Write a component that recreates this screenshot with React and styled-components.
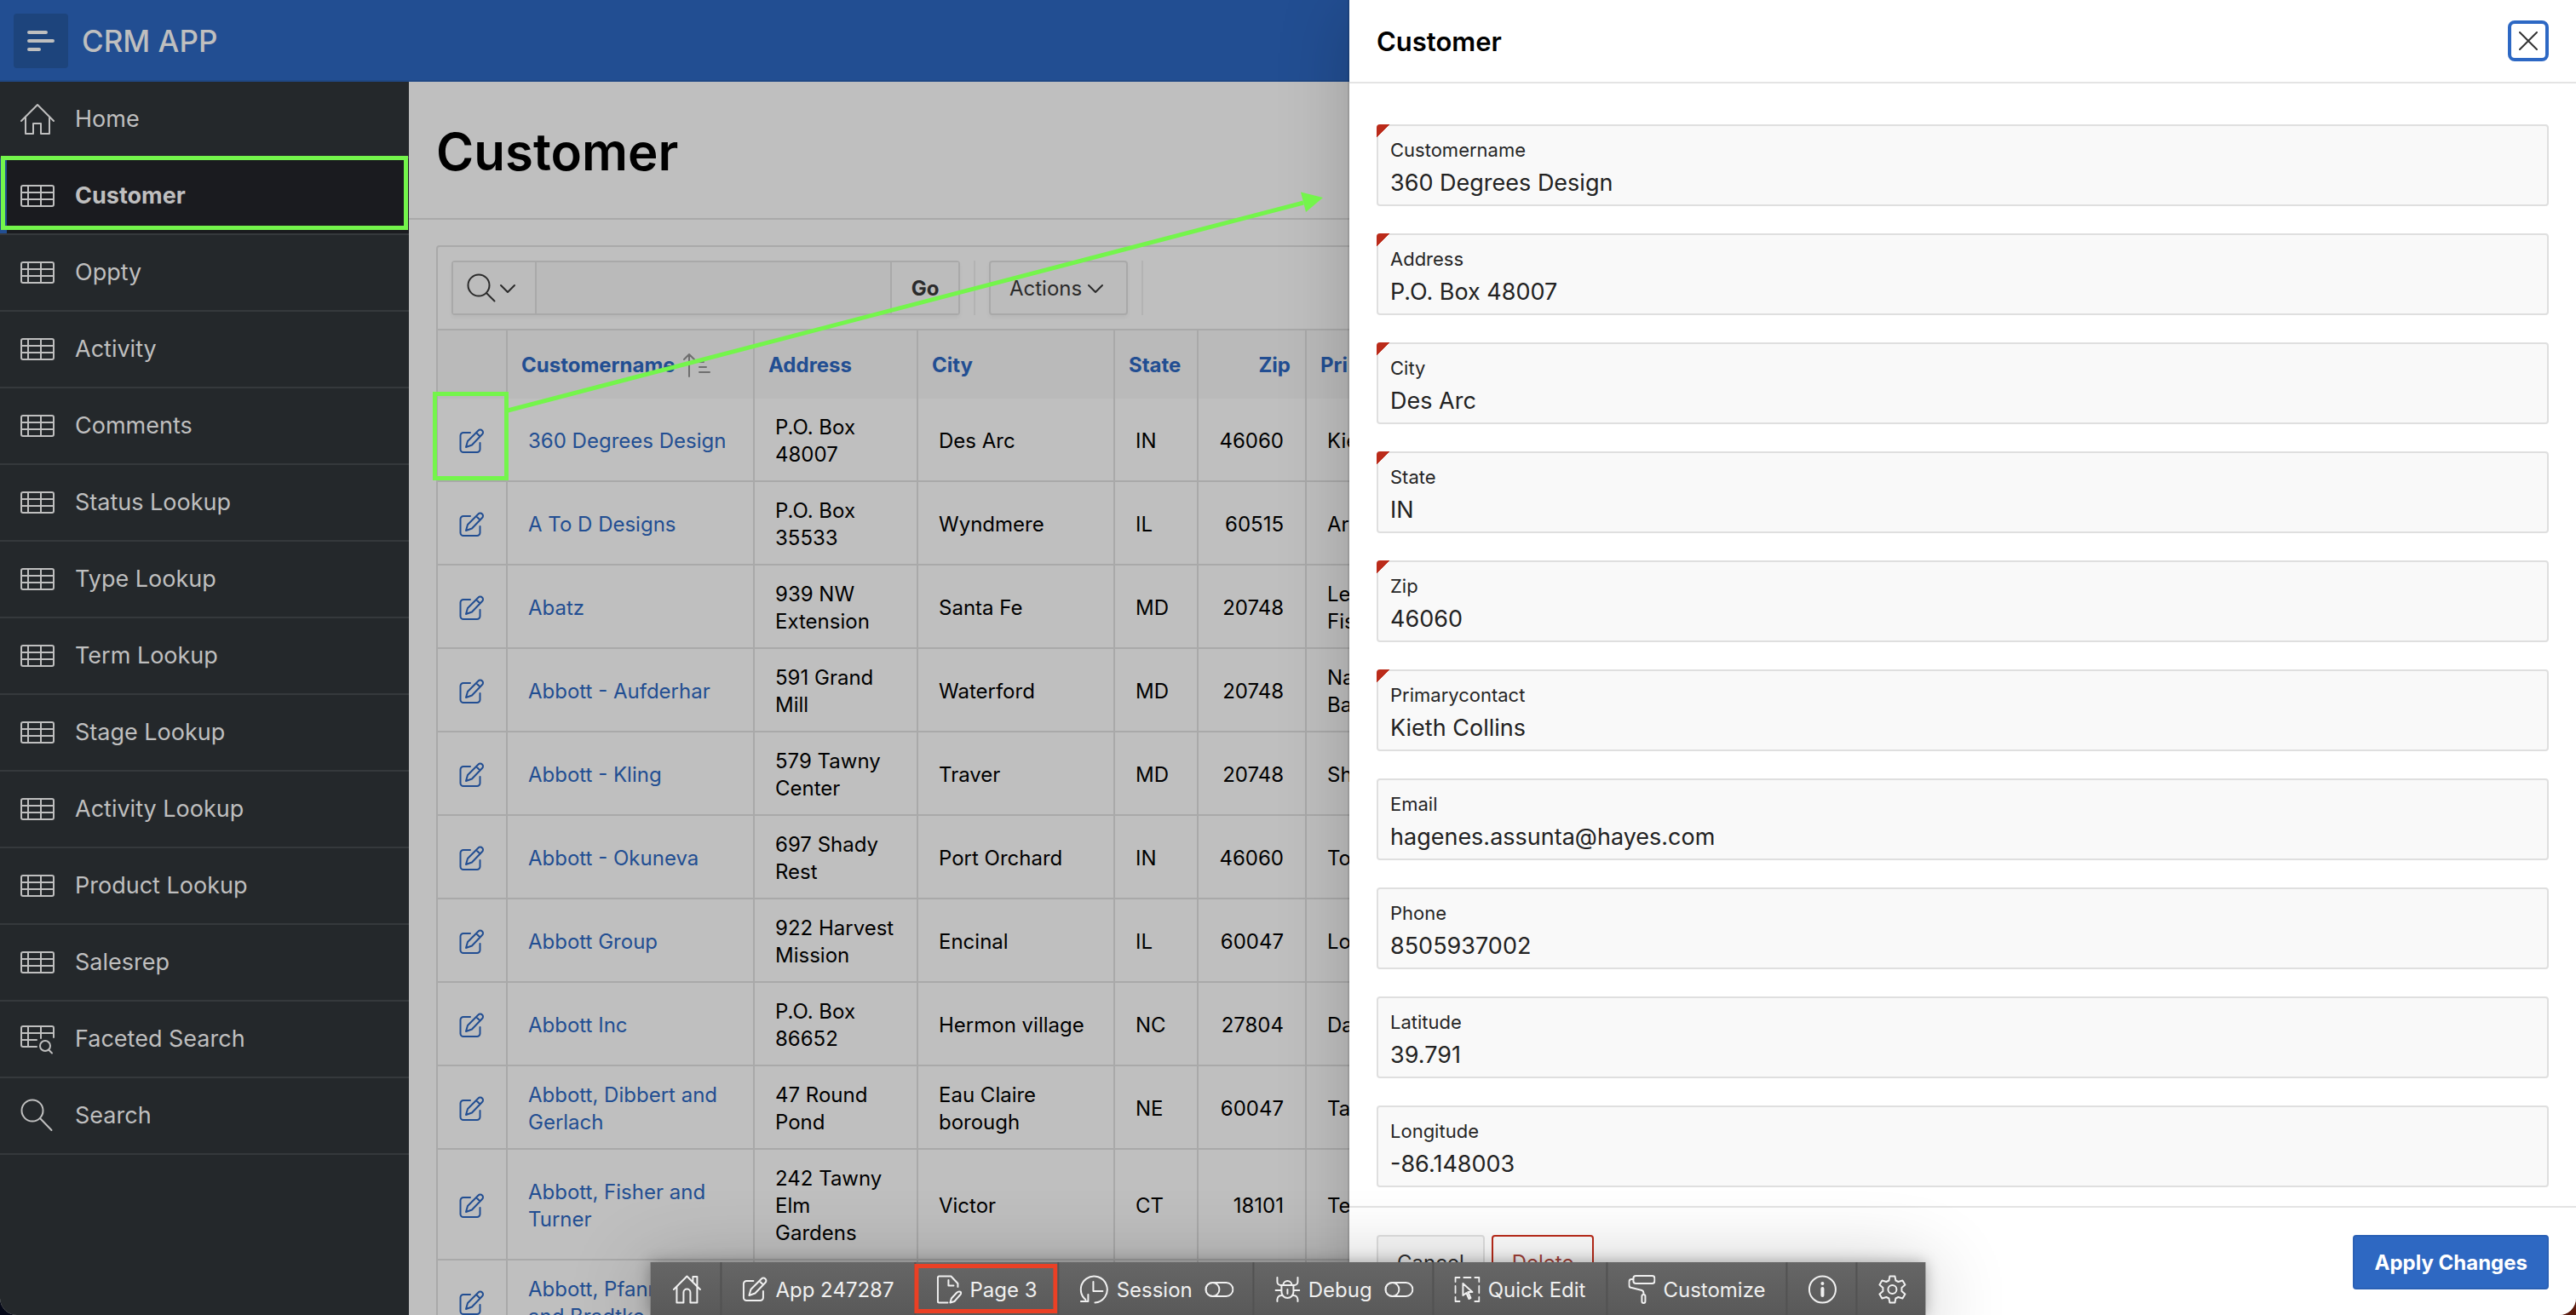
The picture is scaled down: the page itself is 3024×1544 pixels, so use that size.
import React from "react";
import styled, { createGlobalStyle, css } from "styled-components";

const GlobalStyle = createGlobalStyle`
  *, *::before, *::after { box-sizing: border-box; }
  html, body, #root { height: 100%; }
  body {
    margin: 0;
    overflow: hidden;
    background: linear-gradient(90deg, #050818, #5c1a0d);
    font-family: Inter, "Liberation Sans", sans-serif;
    color: #000;
  }
  button, input { font-family: inherit; }
  a { text-decoration: none; }
`;

const LINE = "#a9a9a9";
const BLUE = "#224e92";
const GREEN = "#74f54b";

const Shell = styled.div`
  position: relative;
  height: 100vh;
  display: flex;
  flex-direction: column;
  overflow: hidden;
  border-radius: 0 0 20px 20px;
  background: #bfbfbf;
`;

const Header = styled.header`
  flex: none;
  height: 96px;
  display: flex;
  align-items: center;
  gap: 16px;
  padding: 2px 16px 0;
  background: ${BLUE};
  border-bottom: 2px solid #204885;
`;

const MenuButton = styled.button`
  width: 64px;
  height: 64px;
  padding: 0;
  display: grid;
  place-items: center;
  border: 0;
  border-radius: 4px;
  background: #1d447c;
  color: #bfbfbf;
`;

const Brand = styled.a`
  font-size: 35px;
  line-height: 48px;
  font-weight: 500;
  color: #bfbfbf;
`;

const Body = styled.div`
  flex: 1;
  min-height: 0;
  display: flex;
`;

const Sidebar = styled.nav`
  flex: none;
  width: 480px;
  background: #24282b;
`;

const NavList = styled.ul`
  list-style: none;
  margin: 0;
  padding: 0;
`;

const NavItem = styled.li`
  position: relative;
  border-bottom: 2px solid #35393c;
`;

const NavLink = styled.a`
  height: 88px;
  display: flex;
  align-items: center;
  gap: 24px;
  padding: 0 24px;
  font-size: 27px;
  line-height: 40px;
  color: #bfbfbf;
  ${(p) =>
    p.$active &&
    css`
      background: #1a1b1f;
      box-shadow: inset 8px 0 0 ${BLUE};
      font-weight: 700;
    `}
`;

const Highlight = styled.span`
  position: absolute;
  inset: ${(p) => p.$inset};
  border: 5px solid ${(p) => p.$color};
  pointer-events: none;
`;

const Main = styled.main`
  flex: 1;
  min-width: 0;
`;

const TitleBar = styled.div`
  height: 162px;
  display: flex;
  align-items: center;
  padding: 4px 32px 0;
  border-bottom: 2px solid ${LINE};
`;

const PageTitle = styled.h1`
  margin: 0;
  font-size: 60px;
  line-height: 80px;
  font-weight: 600;
`;

const Report = styled.section`
  margin: 30px 32px 0;
  border: 2px solid ${LINE};
  border-radius: 4px 4px 0 0;
`;

const Toolbar = styled.div`
  display: flex;
  gap: 16px;
  padding: 16px;
`;

const SearchGroup = styled.form`
  display: flex;
  width: 597px;
  height: 64px;
  border: 2px solid ${LINE};
  border-radius: 4px;
  background: #bababa;
  box-shadow: 0 3px 4px rgba(0, 0, 0, 0.04);
`;

const SearchMenu = styled.button`
  width: 98px;
  padding: 0 0 0 16px;
  display: flex;
  align-items: center;
  gap: 4px;
  border: 0;
  border-right: 2px solid ${LINE};
  background: #bcbcbc;
  color: #2b2b2b;
`;

const SearchInput = styled.input`
  flex: 1;
  min-width: 0;
  border: 0;
  padding: 0 12px;
  background: transparent;
  font-size: 24px;
`;

const GoButton = styled.button`
  width: 80px;
  padding: 0;
  border: 0;
  border-left: 2px solid ${LINE};
  background: #bcbcbc;
  color: #2b2b2b;
  font-size: 24px;
  font-weight: 700;
`;

const Divider = styled.span`
  width: 2px;
  height: 64px;
  background: #b3b3b3;
`;

const ActionsButton = styled.button`
  height: 64px;
  padding: 0 26px 0 22px;
  display: flex;
  align-items: center;
  gap: 6px;
  border: 2px solid ${LINE};
  border-radius: 4px;
  background: #bcbcbc;
  box-shadow: 0 3px 4px rgba(0, 0, 0, 0.04);
  color: #2b2b2b;
  font-size: 24px;
`;

const Table = styled.table`
  width: 100%;
  table-layout: fixed;
  border-collapse: separate;
  border-spacing: 0;
  border-top: 2px solid ${LINE};
`;

const Col = styled.col`
  width: ${(p) => p.$w};
`;

const HeadCell = styled.th`
  height: 80px;
  padding: 2px 17px 0 16px;
  background: #bababa;
  border-right: 2px solid ${LINE};
  text-align: ${(p) => p.$align || "left"};
  white-space: nowrap;
  font-size: 24px;
  line-height: 32px;
  font-weight: 700;
  color: ${BLUE};
`;

const HeadLink = styled.a`
  display: inline-flex;
  align-items: center;
  gap: 8px;
  color: ${BLUE};
`;

const Cell = styled.td`
  position: relative;
  height: 98px;
  padding: 18px 25px 14px 24px;
  border-right: 2px solid ${LINE};
  border-bottom: 2px solid ${LINE};
  text-align: ${(p) => p.$align || "left"};
  white-space: pre-line;
  font-size: 24px;
  line-height: 32px;
`;

const CellLink = styled.a`
  color: ${BLUE};
`;

const EditLink = styled.a`
  display: grid;
  place-items: center;
  color: ${BLUE};
`;

const Drawer = styled.aside`
  position: absolute;
  top: 0;
  right: 0;
  bottom: 0;
  width: 1440px;
  max-width: 100%;
  display: flex;
  flex-direction: column;
  background: #fff;
  box-shadow: 0 0 0 2px rgba(0, 0, 0, 0.1), 0 10px 80px rgba(0, 0, 0, 0.2);
`;

const DrawerHeader = styled.div`
  flex: none;
  height: 98px;
  display: flex;
  align-items: center;
  justify-content: space-between;
  padding: 0 32px;
  border-bottom: 2px solid #e4e4e4;
`;

const DrawerTitle = styled.h2`
  margin: 0;
  padding-top: 2px;
  font-size: 31px;
  line-height: 40px;
  font-weight: 600;
`;

const CloseButton = styled.button`
  width: 48px;
  height: 48px;
  padding: 0;
  display: grid;
  place-items: center;
  border: 4px solid #2d68c4;
  border-radius: 8px;
  background: #fff;
  color: #333;
`;

const Fields = styled.div`
  flex: 1;
  min-height: 0;
  overflow: hidden;
  display: flex;
  flex-direction: column;
  gap: 32px;
  padding: 48px 32px 0;
`;

const FieldBox = styled.div`
  flex: none;
  position: relative;
  height: 96px;
  display: flex;
  flex-direction: column;
  padding: 14px 14px 0;
  border: 2px solid #dfdfdf;
  border-radius: 4px;
  background: #f9f9f9;
  ${(p) =>
    p.$required &&
    css`
      &::before {
        content: "";
        position: absolute;
        top: -2px;
        left: -2px;
        width: 16px;
        height: 16px;
        border-top-left-radius: 4px;
        background: linear-gradient(135deg, #bb2b1a 50%, transparent 50%);
      }
    `}
`;

const FieldLabel = styled.label`
  font-size: 22px;
  line-height: 28px;
  color: #262626;
`;

const FieldInput = styled.input`
  width: 100%;
  height: 48px;
  padding: 0;
  border: 0;
  outline: 0;
  background: transparent;
  font-size: 27px;
  color: #222;
`;

const DrawerFooter = styled.div`
  flex: none;
  height: 128px;
  display: flex;
  align-items: flex-start;
  gap: 8px;
  padding: 32px 32px 0;
  border-top: 2px solid #e4e4e4;
`;

const kinds = {
  plain: css`
    border-color: #e0e0e0;
    background: #f9f9f9;
    color: #333;
  `,
  danger: css`
    border-color: #bb2b1a;
    background: #fff;
    color: #a8443a;
  `,
  primary: css`
    margin-left: auto;
    padding: 0 23px;
    border-color: #2a60b5;
    background: #2e68c2;
    color: #fff;
    font-weight: 700;
  `,
};

const ActionButton = styled.button`
  height: 64px;
  padding: 0 22px;
  border: 2px solid;
  border-radius: 4px;
  font-size: 24px;
  ${(p) => kinds[p.$kind]}
`;

const DevBar = styled.div`
  position: absolute;
  left: 50%;
  bottom: 0;
  transform: translateX(-50%);
  height: 62px;
  display: flex;
  background: linear-gradient(#666, #595959);
  box-shadow: 0 0 16px rgba(0, 0, 0, 0.3), 0 16px 96px rgba(0, 0, 0, 0.3);
`;

const DevButton = styled.button`
  position: relative;
  padding: 2px 22px 0 24px;
  display: flex;
  align-items: center;
  gap: 9px;
  border: 0;
  border-left: 2px solid ${(p) => (p.$first ? "transparent" : "#525252")};
  background: transparent;
  color: #f0f0f0;
  font-size: 24px;
  white-space: nowrap;
`;

const DevText = styled.span`
  margin-right: ${(p) => (p.$toggle ? "6px" : "2px")};
`;

const ArrowLayer = styled.svg`
  position: absolute;
  left: 0;
  top: 0;
  pointer-events: none;
`;

function Svg({ w, h, box, sw = 2, children }) {
  return (
    <svg
      width={w}
      height={h}
      viewBox={box || `0 0 ${w} ${h}`}
      fill="none"
      stroke="currentColor"
      strokeWidth={sw}
      strokeLinecap="round"
      strokeLinejoin="round"
      aria-hidden="true"
    >
      {children}
    </svg>
  );
}

const MenuIcon = () => (
  <Svg w={32} h={24} sw={4}>
    <path d="M2 2h20M2 12h28M2 22h12" />
  </Svg>
);

const HomeIcon = () => (
  <Svg w={40} h={40}>
    <path d="M1 22 20 3l19 19M6 18v19h9V25h9v12h10V18" />
  </Svg>
);

const TableIcon = () => (
  <Svg w={40} h={40}>
    <rect x="1" y="8" width="38" height="24" rx="2" />
    <path d="M1 16h38M1 24h38M9 8v24M24 8v24" />
  </Svg>
);

const FacetedIcon = () => (
  <Svg w={40} h={40}>
    <path d="M19 29H3a2 2 0 0 1-2-2V7a2 2 0 0 1 2-2h34a2 2 0 0 1 2 2v11M1 13h38M1 21h18M9 5v24M24 5v14" />
    <circle cx="29" cy="28" r="6" />
    <path d="m33 32.500 4 4" />
  </Svg>
);

const SearchIcon = () => (
  <Svg w={40} h={40}>
    <circle cx="14" cy="14" r="12.500" />
    <path d="m23 23 13.500 14" />
  </Svg>
);

const BarSearchIcon = () => (
  <Svg w={34} h={34}>
    <circle cx="14" cy="14" r="12.500" />
    <path d="m23 23 9.500 9.500" />
  </Svg>
);

const ChevronIcon = () => (
  <Svg w={20} h={20}>
    <path d="m2 7 8 8 8-8" />
  </Svg>
);

const SortIcon = () => (
  <Svg w={34} h={30}>
    <g stroke="#6f6f6f">
      <path d="M8 28V2M2 8l6-6 6 6M20 11h5M20 17h8M20 23h12" />
    </g>
  </Svg>
);

const EditIcon = () => (
  <Svg w={30} h={30}>
    <path d="M13 5H5a3.500 3.500 0 0 0-3.500 3.500v16A3.500 3.500 0 0 0 5 28h16a3.500 3.500 0 0 0 3.500-3.500V17" />
    <path d="M8 22l2-7L22.500 2.500a3 3 0 0 1 4.500 0 3 3 0 0 1 0 4.500L15 19.500ZM20 5l4.500 4.500" />
  </Svg>
);

const CloseIcon = () => (
  <Svg w={22} h={22}>
    <path d="m1 1 20 20M21 1 1 21" />
  </Svg>
);

const DevHomeIcon = () => (
  <Svg w={34} h={34}>
    <path d="M1.500 17 17 1.500 32.500 17M5 14v18.500h8V20.500a4 4 0 0 1 8 0v12h8V14M24 8V2h5v11" />
  </Svg>
);

const DevPageIcon = () => (
  <Svg w={30} h={34}>
    <path d="M13 32.500H3a1.500 1.500 0 0 1-1.500-1.500V3A1.500 1.500 0 0 1 3 1.500h14l8 8.500v4M14 6v6.500h6" />
    <path d="m16 32.500 1.500-5 6-6.500c3-3 7-1 4.500 2l-7 8Z" />
  </Svg>
);

const SessionIcon = () => (
  <Svg w={34} h={34}>
    <path d="M7 29A15.500 15.500 0 1 1 18 32.500M16 8v11h11M1.500 31H10v-8" />
  </Svg>
);

const ToggleIcon = () => (
  <Svg w={34} h={18}>
    <rect x="1" y="1" width="32" height="16" rx="8" />
    <circle cx="9" cy="9" r="8" />
  </Svg>
);

const BugIcon = () => (
  <Svg w={30} h={30}>
    <path d="M8 10h14v8a7 7 0 0 1-14 0ZM10 10a5 5 0 0 1 10 0M15 15v5M1 16h7M22 16h7M3 1v5a4 4 0 0 0 4 4h1M27 1v5a4 4 0 0 1-4 4h-1M3 29v-2a5 5 0 0 1 6-5M27 29v-2a5 5 0 0 0-6-5" />
  </Svg>
);

const QuickEditIcon = () => (
  <Svg w={30} h={30}>
    <path d="M1 6V1h5M11 1h8M24 1h5v5M1 11v8M1 24v5h5M29 11v8M24 29h5v-5" />
    <path d="M10 8v14l4-3 3 7 2-1-3-7h5Z" />
  </Svg>
);

const CustomizeIcon = () => (
  <Svg w={32} h={34}>
    <rect x="6" y="1" width="25" height="9" rx="3" />
    <path d="M6 5H4a3 3 0 0 0-3 3v4a3 3 0 0 0 3 3l12 3a3 3 0 0 1 2 3v2M18 23a2 2 0 0 1 2 2v6a2 2 0 0 1-4 0v-6a2 2 0 0 1 2-2Z" />
  </Svg>
);

const InfoIcon = () => (
  <Svg w={34} h={34}>
    <circle cx="17" cy="17" r="15.500" />
    <path d="M17 16v8" strokeWidth="4" />
    <path d="M17 10v.1" strokeWidth="4" />
  </Svg>
);

const GearIcon = () => (
  <Svg w={34} h={34}>
    <path d="M14 1.500h6l1 5 3 1.500 5-1.500 3 5-4 3.500v4l4 3.500-3 5-5-1.500-3 1.500-1 5h-6l-1-5-3-1.500-5 1.500-3-5L6 19v-4l-4-3.500 3-5L10 8l3-1.500Z" />
    <circle cx="17" cy="17" r="5" />
  </Svg>
);

const NAV = [
  ["Home", HomeIcon],
  ["Customer", TableIcon],
  ["Oppty", TableIcon],
  ["Activity", TableIcon],
  ["Comments", TableIcon],
  ["Status Lookup", TableIcon],
  ["Type Lookup", TableIcon],
  ["Term Lookup", TableIcon],
  ["Stage Lookup", TableIcon],
  ["Activity Lookup", TableIcon],
  ["Product Lookup", TableIcon],
  ["Salesrep", TableIcon],
  ["Faceted Search", FacetedIcon],
  ["Search", SearchIcon],
];

const ROWS = [
  ["360 Degrees Design", "P.O. Box 48007", "Des Arc", "IN", "46060", "Kie"],
  ["A To D Designs", "P.O. Box 35533", "Wyndmere", "IL", "60515", "Ar"],
  ["Abatz", "939 NW Extension", "Santa Fe", "MD", "20748", "Le\nFis"],
  ["Abbott - Aufderhar", "591 Grand Mill", "Waterford", "MD", "20748", "Na\nBa"],
  ["Abbott - Kling", "579 Tawny Center", "Traver", "MD", "20748", "Sh"],
  ["Abbott - Okuneva", "697 Shady Rest", "Port Orchard", "IN", "46060", "To"],
  ["Abbott Group", "922 Harvest Mission", "Encinal", "IL", "60047", "Lo"],
  ["Abbott Inc", "P.O. Box 86652", "Hermon village", "NC", "27804", "Da"],
  ["Abbott, Dibbert and Gerlach", "47 Round Pond", "Eau Claire borough", "NE", "60047", "Ta"],
  ["Abbott, Fisher and Turner", "242 Tawny Elm Gardens", "Victor", "CT", "18101", "Te"],
  ["Abbott, Pfannerstill and Bradtke", "", "", "", "", ""],
];

const FIELDS = [
  ["Customername", "360 Degrees Design", true],
  ["Address", "P.O. Box 48007", true],
  ["City", "Des Arc", true],
  ["State", "IN", true],
  ["Zip", "46060", true],
  ["Primarycontact", "Kieth Collins", true],
  ["Email", "hagenes.assunta@hayes.com", false],
  ["Phone", "8505937002", false],
  ["Latitude", "39.791", false],
  ["Longitude", "-86.148003", false],
];

const DEV = [
  { icon: DevHomeIcon, name: "Home" },
  { icon: EditIcon, text: "App 247287" },
  { icon: DevPageIcon, text: "Page 3", marked: true },
  { icon: SessionIcon, text: "Session", toggle: true },
  { icon: BugIcon, text: "Debug", toggle: true },
  { icon: QuickEditIcon, text: "Quick Edit" },
  { icon: CustomizeIcon, text: "Customize" },
  { icon: InfoIcon, name: "Page Info" },
  { icon: GearIcon, name: "Settings" },
];

function CustomerReport() {
  return (
    <Report>
      <Toolbar>
        <SearchGroup onSubmit={(e) => e.preventDefault()}>
          <SearchMenu type="button" aria-label="Select columns to search">
            <BarSearchIcon />
            <ChevronIcon />
          </SearchMenu>
          <SearchInput aria-label="Search report" />
          <GoButton type="submit">Go</GoButton>
        </SearchGroup>
        <Divider />
        <ActionsButton type="button">
          Actions
          <ChevronIcon />
        </ActionsButton>
        <Divider />
      </Toolbar>
      <Table>
        <colgroup>
          <Col $w="82px" />
          <Col $w="290px" />
          <Col $w="192px" />
          <Col $w="231px" />
          <Col $w="98px" />
          <Col $w="127px" />
          <Col $w="auto" />
        </colgroup>
        <thead>
          <tr>
            <HeadCell aria-label="Edit" />
            <HeadCell>
              <HeadLink href="#name">
                Customername
                <SortIcon />
              </HeadLink>
            </HeadCell>
            <HeadCell><HeadLink href="#address">Address</HeadLink></HeadCell>
            <HeadCell><HeadLink href="#city">City</HeadLink></HeadCell>
            <HeadCell><HeadLink href="#state">State</HeadLink></HeadCell>
            <HeadCell $align="right"><HeadLink href="#zip">Zip</HeadLink></HeadCell>
            <HeadCell><HeadLink href="#contact">Pri</HeadLink></HeadCell>
          </tr>
        </thead>
        <tbody>
          {ROWS.map(([name, address, city, state, zip, contact], i) => (
            <tr key={name}>
              <Cell>
                <EditLink href="#edit" aria-label="Edit"><EditIcon /></EditLink>
                {i === 0 && <Highlight $color={GREEN} $inset="-8px -3px 0 -6px" />}
              </Cell>
              <Cell><CellLink href="#customer">{name}</CellLink></Cell>
              <Cell>{address}</Cell>
              <Cell>{city}</Cell>
              <Cell>{state}</Cell>
              <Cell $align="right">{zip}</Cell>
              <Cell>{contact}</Cell>
            </tr>
          ))}
        </tbody>
      </Table>
    </Report>
  );
}

function CustomerDrawer() {
  return (
    <Drawer role="dialog" aria-label="Customer">
      <DrawerHeader>
        <DrawerTitle>Customer</DrawerTitle>
        <CloseButton type="button" aria-label="Close"><CloseIcon /></CloseButton>
      </DrawerHeader>
      <Fields>
        {FIELDS.map(([label, value, required]) => (
          <FieldBox key={label} $required={required}>
            <FieldLabel htmlFor={`field-${label}`}>{label}</FieldLabel>
            <FieldInput id={`field-${label}`} defaultValue={value} />
          </FieldBox>
        ))}
      </Fields>
      <DrawerFooter>
        <ActionButton type="button" $kind="plain">Cancel</ActionButton>
        <ActionButton type="button" $kind="danger">Delete</ActionButton>
        <ActionButton type="button" $kind="primary">Apply Changes</ActionButton>
      </DrawerFooter>
    </Drawer>
  );
}

export default function App() {
  return (
    <>
      <GlobalStyle />
      <Shell>
        <Header>
          <MenuButton type="button" aria-label="Toggle navigation"><MenuIcon /></MenuButton>
          <Brand href="#home">CRM APP</Brand>
        </Header>
        <Body>
          <Sidebar>
            <NavList>
              {NAV.map(([label, Icon]) => (
                <NavItem key={label}>
                  <NavLink href={`#${label}`} $active={label === "Customer"}>
                    <Icon />
                    {label}
                  </NavLink>
                  {label === "Customer" && <Highlight $color={GREEN} $inset="-3px 1px 4px 1px" />}
                </NavItem>
              ))}
            </NavList>
          </Sidebar>
          <Main>
            <TitleBar><PageTitle>Customer</PageTitle></TitleBar>
            <CustomerReport />
          </Main>
        </Body>
        <CustomerDrawer />
        <ArrowLayer width="1600" height="500" aria-hidden="true">
          <path d="M596 482 1530 238" stroke={GREEN} strokeWidth="5" />
          <path d="M1527 225.500 1553 232 1533 249Z" fill={GREEN} />
        </ArrowLayer>
        <DevBar role="toolbar" aria-label="Developer toolbar">
          {DEV.map(({ icon: Icon, text, toggle, marked, name }, i) => (
            <DevButton key={text || name} type="button" aria-label={name} $first={i === 0}>
              <Icon />
              {text && <DevText $toggle={toggle}>{text}</DevText>}
              {toggle && <ToggleIcon />}
              {marked && <Highlight $color="#eb4025" $inset="2px 0 2px -2px" />}
            </DevButton>
          ))}
        </DevBar>
      </Shell>
    </>
  );
}
